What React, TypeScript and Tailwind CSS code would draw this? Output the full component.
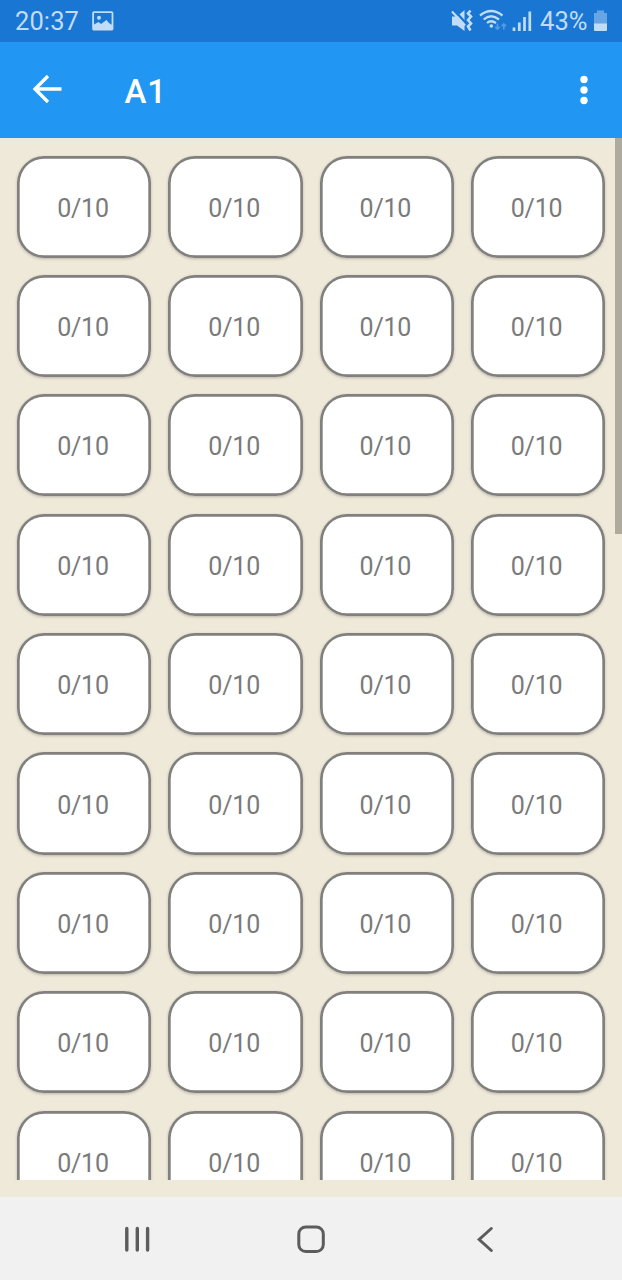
const cards = Array.from({ length: 36 }, (_, i) => ({ id: i, score: "0/10" }));

function StatusBar() {
  return (
    <div className="flex h-[41.5px] shrink-0 items-center justify-between bg-[#1976d2] pr-[14px] pl-[15px] text-[#c1dcf6]">
      <div className="flex items-center">
        <span className="w-[77px] pt-[1px] text-[25.5px] leading-[42px] tracking-[0.1px]">20:37</span>
        <svg className="h-[20px] w-[22px]" viewBox="0 0 22 20" fill="none">
          <rect x="1.1" y="1.1" width="19.4" height="17.6" rx="1" stroke="currentColor" strokeWidth="1.8" />
          <path d="M2 17V13.5L6.5 11L9 13L14.5 9L17 12L20 14V18H2Z" fill="currentColor" />
          <circle cx="7" cy="6.7" r="2" fill="currentColor" />
        </svg>
      </div>
      <div className="flex items-center">
        <svg className="h-[24px] w-[84px]" viewBox="450 9 84 24" fill="none" stroke="currentColor">
          <path d="M452 16.5H457L464.5 10V31L457 25.5H452Z" fill="currentColor" stroke="none" />
          <path d="M453.5 9.5L468 25.5" stroke="#1976d2" strokeWidth="2.4" />
          <path d="M452 11.5L465 25.5" strokeWidth="2.2" />
          <path d="M470.5 10.5L468 13.5L471 16.5L468 20L471 23.5L468 26.5L470.5 30.5" strokeWidth="2.6" />
          <path d="M480 15.5Q491 6.5 502.5 15.5" strokeWidth="2.3" />
          <path d="M483.7 19.5Q491 13 499 19.5" strokeWidth="2.3" />
          <path d="M487 23Q491 19.5 496 23" strokeWidth="2.3" />
          <circle cx="491.3" cy="26" r="1.8" fill="currentColor" stroke="none" />
          <path d="M497.5 23.5V29M495.3 26.8L497.5 29L499.7 26.8M503.8 29.5V24M501.6 26.2L503.8 24L506 26.2" stroke="#559be3" strokeWidth="1.7" />
          <path d="M514 27.5V31M519.3 22.5V31M524.5 17V31M529.8 11.5V31" strokeWidth="2.7" />
        </svg>
        <span className="ml-[6px] w-[53px] pt-[1px] text-[25.5px] leading-[42px] tracking-[0.1px] whitespace-nowrap">43%</span>
        <svg className="h-[22px] w-[15px]" viewBox="0 0 15 22">
          <path d="M4 0.5H11V3H14V14H1V3H4Z" fill="#67a5e4" />
          <path d="M1 13.5H14V20Q14 21 13 21H2Q1 21 1 20Z" fill="currentColor" />
        </svg>
      </div>
    </div>
  );
}

function AppBar() {
  return (
    <header className="flex h-[96.5px] shrink-0 items-center bg-[#2196f3] text-white">
      <button className="ml-[32px]" aria-label="Back">
        <svg className="-mt-[1px] h-[30px] w-[31px]" viewBox="0 0 31 30" fill="none" stroke="currentColor" strokeWidth="3.3">
          <path d="M29.5 15H3.5M16 2L3 15L16 28" />
        </svg>
      </button>
      <h1 className="ml-[61.5px] pt-[4px] text-[33px] leading-[40px] font-medium tracking-[0.9px]">A1</h1>
      <button className="mr-[33px] ml-auto" aria-label="More options">
        <svg className="h-[30px] w-[10px]" viewBox="0 0 10 30" fill="currentColor">
          <circle cx="5" cy="4.5" r="3.7" />
          <circle cx="5" cy="15" r="3.7" />
          <circle cx="5" cy="25.5" r="3.7" />
        </svg>
      </button>
    </header>
  );
}

function NavBar() {
  return (
    <nav className="flex h-[83px] shrink-0 items-center justify-between bg-[#f1f1f1] px-[122px] text-[#5c5c5c]">
      <svg className="h-[30px] w-[30px]" viewBox="0 0 30 30" stroke="currentColor" strokeWidth="3.4" strokeLinecap="round">
        <path d="M4.8 4.5V26M15.3 4.5V26M25.6 4.5V26" />
      </svg>
      <svg className="h-[30px] w-[30px]" viewBox="0 0 30 30" fill="none" stroke="currentColor" strokeWidth="3">
        <rect x="2.8" y="3" width="24.5" height="24.5" rx="7" />
      </svg>
      <svg className="h-[30px] w-[30px]" viewBox="0 0 30 30" fill="none" stroke="currentColor" strokeWidth="3" strokeLinecap="round">
        <path d="M21.3 4.5L9.2 15.5L21.3 26.5" />
      </svg>
    </nav>
  );
}

export default function App() {
  return (
    <div className="flex h-[1280px] w-[622px] flex-col overflow-hidden bg-[#efe9da] font-[Roboto,sans-serif]">
      <StatusBar />
      <AppBar />
      <main className="flex min-h-0 flex-1">
        <div className="mb-[17px] flex-1 overflow-hidden pt-[17.5px] pl-[17.3px]">
          <div className="grid w-[587.6px] grid-cols-4 gap-[17.2px]">
            {cards.map((card) => (
              <div
                key={card.id}
                className="flex h-[102.2px] items-center justify-center rounded-[27px] bg-white pt-[3.6px] pr-[2.6px] text-[25px] tracking-[-0.2px] text-[#7a7a7a] shadow-[inset_0_0_0_2.7px_#81807d,0_1px_3px_rgba(0,0,0,0.22)]"
              >
                {card.score}
              </div>
            ))}
          </div>
        </div>
        <div className="h-[395.5px] w-[7px] shrink-0 bg-[#aeaa9c]" />
      </main>
      <NavBar />
    </div>
  );
}
